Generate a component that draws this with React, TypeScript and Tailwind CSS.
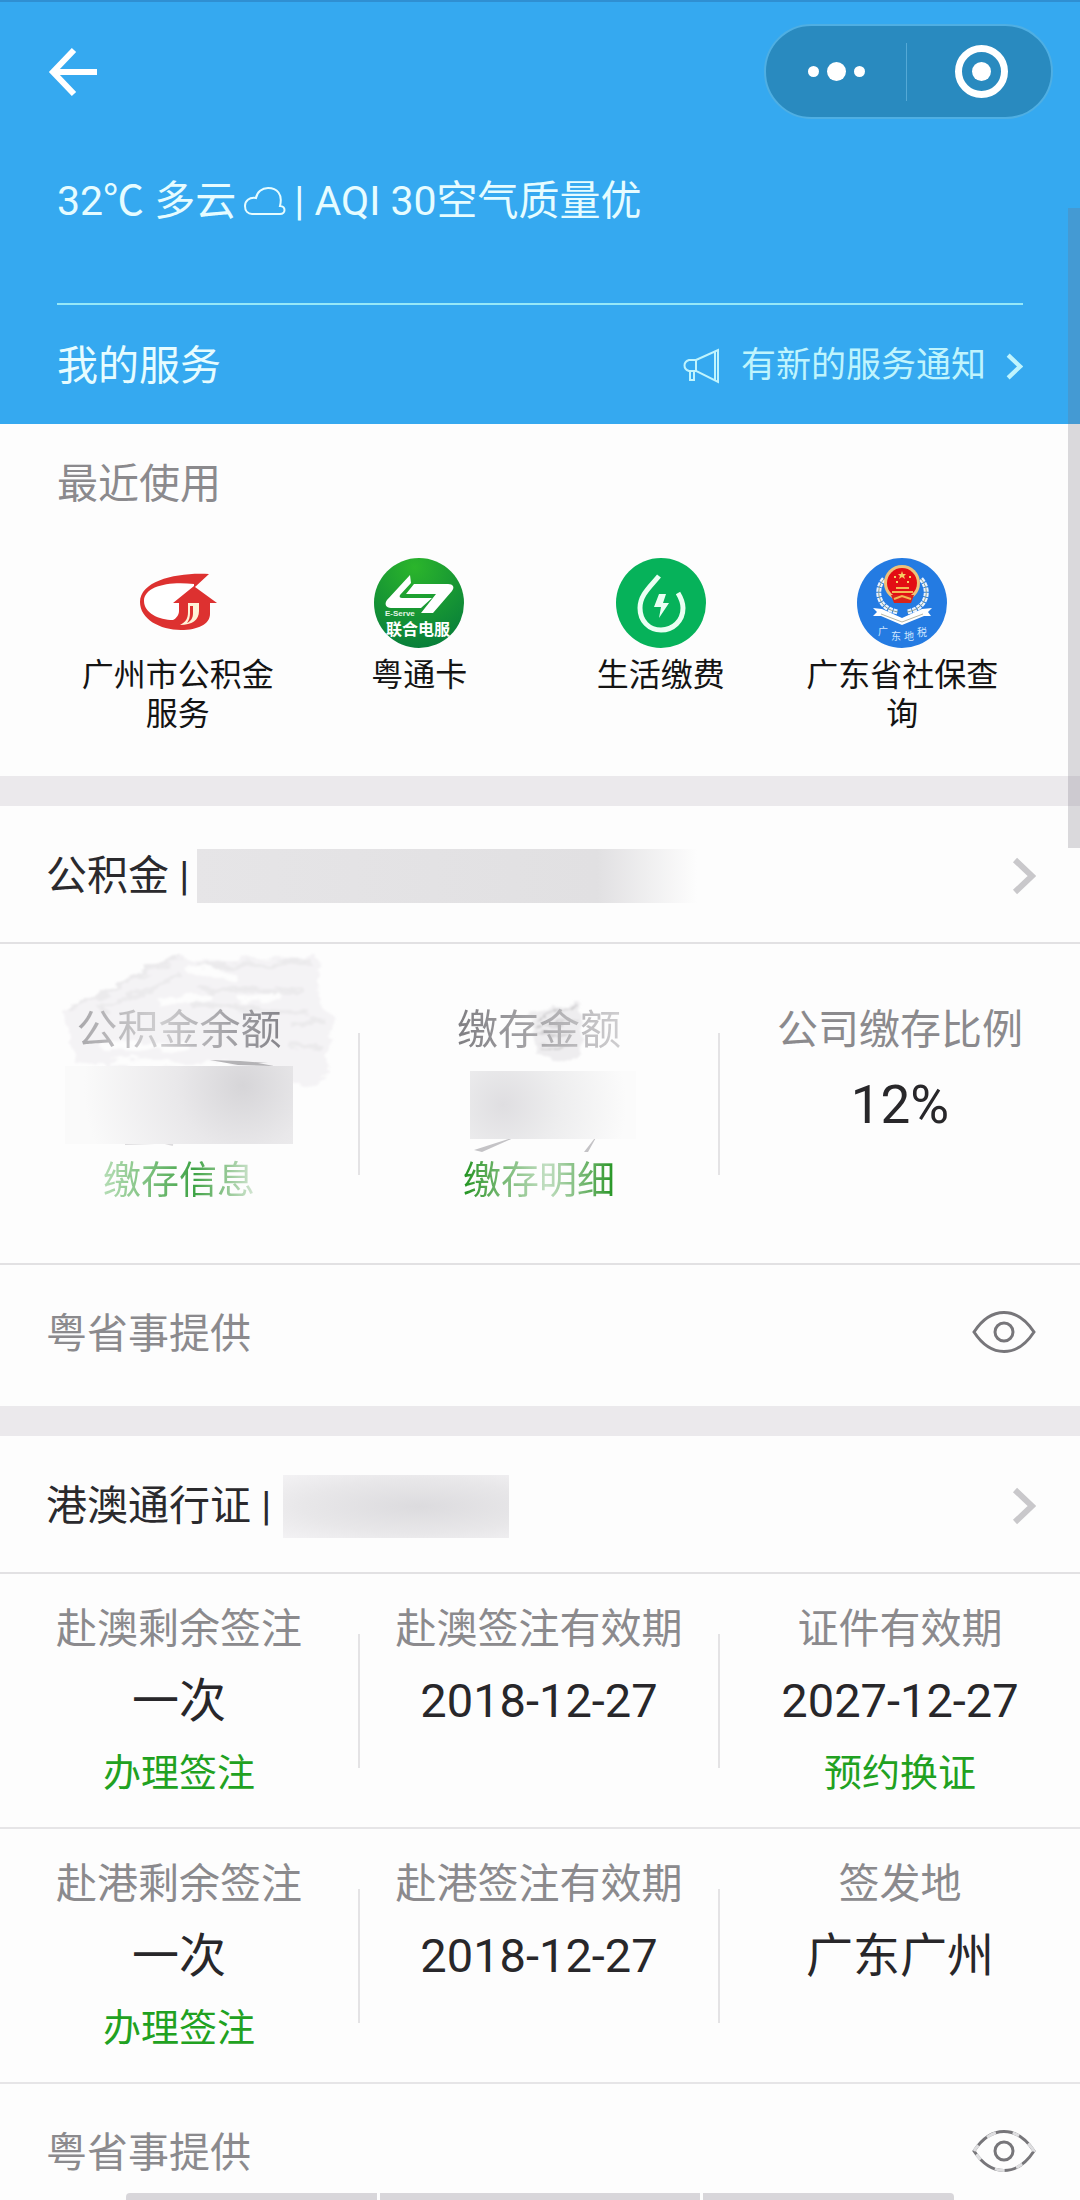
import { useState } from "react";
import type { ReactNode } from "react";

type Field = {
  label: ReactNode;
  value?: ReactNode;
  action?: ReactNode;
};

function FundLogo() {
  return (
    <svg viewBox="0 0 90 90" className="size-[90px]" aria-hidden="true">
      <path
        d="M76 16C46 14 7 22 7 44c0 17 20 28 41 28 17 0 29-6 29-16V45h7L62 29l14-13z"
        fill="#dd3130"
      />
      <path d="M61 26C36 23 11 28 11 43c0 12 15 19 29 19 4-2 6-6 6-9v-8h-6l21-17z" fill="#fff" />
      <path d="M57 45h10v7c0 9-8 15-20 16 6-3 10-8 10-14z" fill="#dd3130" />
      <path d="M55 45h11v8c0 9-7 14-19 14 6-3 8-7 8-13z" fill="#fff3d8" />
      <path d="M57 48h3v7c0 5-2 8-6 10 2-3 3-6 3-10z" fill="#dd3130" />
    </svg>
  );
}

function EServeLogo() {
  return (
    <svg viewBox="0 0 90 90" className="size-[90px]" aria-hidden="true">
      <defs>
        <radialGradient id="eserve" cx="45%" cy="10%" r="90%">
          <stop offset="0" stopColor="#2bb52b" />
          <stop offset="1" stopColor="#087f3a" />
        </radialGradient>
      </defs>
      <circle cx="45" cy="45" r="45" fill="url(#eserve)" />
      <path d="M36 17 37 25 26 37c-1 2 0 3 2 3h30L47 50H17c-5 0-7-4-4-8z" fill="#fff" />
      <path d="M40 26h34c5 0 7 3 4 7L59 55H47l15-19H32z" fill="#fff" />
      <text x="11" y="58" fontSize="8" fontWeight="700" fill="#e4f5e4" fontFamily="Liberation Sans, sans-serif">
        E-Serve
      </text>
      <text x="12" y="77" fontSize="16" fontWeight="700" fill="#fff" fontFamily="Noto Sans CJK SC, sans-serif">
        联合电服
      </text>
    </svg>
  );
}

function UtilityLogo() {
  return (
    <svg viewBox="0 0 90 90" className="size-[90px]" fill="none" aria-hidden="true">
      <circle cx="45" cy="45" r="45" fill="#06b25a" />
      <path
        d="M43 18C34 29 24 37 24 50c0 13 9 22 21 22s22-9 22-22c0-6-2-10-5-15"
        stroke="#eafff3"
        strokeWidth="5"
      />
      <path d="M43 36h7l-3 9h6L43 60l2-11h-7z" fill="#eafff3" />
    </svg>
  );
}

function TaxLogo() {
  return (
    <svg viewBox="0 0 90 90" className="size-[90px]" fill="none" aria-hidden="true">
      <circle cx="45" cy="45" r="45" fill="#247be2" />
      <path d="M27 21c-10 11-6 30 14 33M64 21c10 11 6 30-14 33" stroke="#e9f3ff" strokeWidth="5" strokeDasharray="4 1" />
      <path d="M27 21c-10 11-6 30 14 33M64 21c10 11 6 30-14 33" stroke="#8d9f90" strokeWidth="1" />
      <circle cx="45" cy="25" r="18" fill="#eec27a" />
      <circle cx="45" cy="25" r="15" fill="#e30d14" />
      <path d="M34 37h23l-3 8H37z" fill="#d8231b" />
      <path d="M35 34h21M39 30h13M37 41l8-3 9 3" stroke="#f3b653" strokeWidth="2" />
      <path d="m45 13 1 3h3l-2 2 1 3-3-2-3 2 1-3-2-2h3z" fill="#f6cf62" />
      <path d="M37 18h2v2h-2zM52 18h2v2h-2zM39 23h2v2h-2zM50 23h2v2h-2z" fill="#f6cf62" />
      <path d="m16 50 9 1 20 9 20-9 10-1-4 4 3 4-7 0-22 9-21-9h-8l4-4z" fill="#fff" />
      <path d="m24 56 21 8 21-8" stroke="#b7b7a5" strokeWidth="1" />
      <g fill="#cfe6ff" fontSize="10" fontFamily="Noto Sans CJK SC, sans-serif">
        <text x="21" y="77">广</text>
        <text x="34" y="82">东</text>
        <text x="47" y="82">地</text>
        <text x="60" y="78">税</text>
      </g>
    </svg>
  );
}

function Chevron({ className }: { className: string }) {
  return (
    <svg viewBox="0 0 24 38" className={className} fill="none" stroke="currentColor" strokeWidth="6" aria-hidden="true">
      <path d="m3 3 17 16L3 35" />
    </svg>
  );
}

function Eye({ worn }: { worn?: boolean }) {
  return (
    <svg viewBox="0 0 64 44" className="h-11 w-16" fill="none" stroke="#77767a" strokeWidth="3" aria-hidden="true">
      <path d="M2 22C19-4 45-4 62 22 45 48 19 48 2 22z" />
      {worn && <path d="M2 22C19-4 45-4 62 22 45 48 19 48 2 22z" stroke="#dedee0" strokeDasharray="7 12 10 17" />}
      <circle cx="32" cy="22" r="9" />
    </svg>
  );
}

const recent = [
  { name: "广州市公积金服务", logo: <FundLogo /> },
  { name: "粤通卡", logo: <EServeLogo /> },
  { name: "生活缴费", logo: <UtilityLogo /> },
  { name: "广东省社保查询", logo: <TaxLogo /> },
];

const macau: Field[] = [
  { label: "赴澳剩余签注", value: "一次", action: "办理签注" },
  { label: "赴澳签注有效期", value: "2018-12-27" },
  { label: "证件有效期", value: "2027-12-27", action: "预约换证" },
];

const hongkong: Field[] = [
  { label: "赴港剩余签注", value: "一次", action: "办理签注" },
  { label: "赴港签注有效期", value: "2018-12-27" },
  { label: "签发地", value: "广东广州" },
];

function SectionHeader({ title, children }: { title: string; children: ReactNode }) {
  return (
    <a href="#" className="flex h-[138px] items-center border-b-2 border-[#e2e1e3] pt-1 pr-11 pl-[46px]">
      <h2 className="text-[41px] leading-12 whitespace-pre text-[#2b2a2d]">{title} |</h2>
      {children}
      <Chevron className="ml-auto h-[38px] w-6 text-[#c9c8cb]" />
    </a>
  );
}

function Fields({ items }: { items: Field[] }) {
  return (
    <div className="flex h-[255px] border-b-2 border-[#e6e5e7]">
      {items.map((f, i) => (
        <div key={i} className="flex flex-1">
          <div className="flex flex-1 flex-col items-center gap-5 pt-[31px]">
            <div className="text-[41px] leading-12 text-[#8b8a8d]">{f.label}</div>
            <div className="text-[47px] leading-14 text-[#28272a]">{f.value}</div>
            {f.action && (
              <a href="#" className="text-[38px] leading-12 text-[#21a121]">
                {f.action}
              </a>
            )}
          </div>
          {i < items.length - 1 && <div className="h-[134px] w-[2px] self-center bg-[#e4e3e5]" />}
        </div>
      ))}
    </div>
  );
}

function Provider({ hidden, onToggle, last }: { hidden: boolean; onToggle: () => void; last?: boolean }) {
  return (
    <div className={`flex items-center justify-between pt-[45px] pr-11 pl-[46px] ${last ? "pb-4" : "pb-12"}`}>
      <span className="text-[41px] leading-12 text-[#8b8a8d]">粤省事提供</span>
      <button aria-label="显示或隐藏" aria-pressed={hidden} onClick={onToggle} className="cursor-pointer pb-1">
        <Eye worn={last} />
      </button>
    </div>
  );
}

export default function App() {
  const [hidden, setHidden] = useState(true);
  const toggle = () => setHidden((v) => !v);

  return (
    <div className="relative w-full overflow-hidden bg-[#fdfdfd] font-['Roboto','Noto_Sans_CJK_SC',sans-serif]" lang="zh-CN">
      <header className="border-t-2 border-[#2f8fd2] bg-[#35a9f0] px-[57px] text-[#e6fcff]">
        <div className="-mx-[57px] flex items-center justify-between pt-[22px] pr-[27px] pl-12">
          <button aria-label="返回" className="cursor-pointer">
            <svg viewBox="0 0 50 50" className="size-[50px]" fill="none" stroke="#fff" strokeWidth="6" aria-hidden="true">
              <path d="M26 3 5 25l21 22M5 25h44" />
            </svg>
          </button>
          <div className="flex h-[95px] w-[289px] items-center rounded-full border-2 border-[#4fafe3] bg-[#298abf]">
            <button aria-label="更多" className="flex h-full flex-1 cursor-pointer items-center justify-center gap-2">
              <span className="size-[11px] rounded-full bg-white" />
              <span className="size-[19px] rounded-full bg-white" />
              <span className="size-[11px] rounded-full bg-white" />
            </button>
            <span className="h-[58px] w-px bg-[#55a9d6]" />
            <button aria-label="关闭" className="flex h-full flex-1 cursor-pointer items-center justify-center pl-1">
              <span className="flex size-[53px] items-center justify-center rounded-full border-[7px] border-white">
                <span className="size-[19px] rounded-full bg-white" />
              </span>
            </button>
          </div>
        </div>

        <p className="mt-[58px] flex items-center text-[41px] leading-12 whitespace-pre">
          <span>32℃ 多云</span>
          <svg viewBox="0 0 42 30" className="mx-2 h-[30px] w-[42px]" fill="none" stroke="currentColor" strokeWidth="2" aria-hidden="true">
            <path d="M8 28h28c6 0 6-8 0-8C39 8 33 2 24 2 18 2 13 6 12 12 5 11 1 15 1 20c0 5 3 8 7 8z" />
          </svg>
          <span>| AQI 30空气质量优</span>
        </p>

        <div className="mt-[78px] flex h-[121px] items-center justify-between border-t-2 border-[#96e8f8] pt-[3px]">
          <h1 className="text-[41px] leading-12">我的服务</h1>
          <a href="#" className="flex items-center text-[35px] leading-12 text-[#bff4fd]">
            <svg viewBox="0 0 38 36" className="mr-5 h-9 w-[38px]" fill="none" stroke="currentColor" strokeWidth="2" aria-hidden="true">
              <path d="M13 12 35 2v32L13 23zM13 12H6c-6 2-6 9 0 11h7M7 23v9h4v-9M32 4v28" />
            </svg>
            有新的服务通知
            <Chevron className="ml-5 h-[27px] w-[17px]" />
          </a>
        </div>
      </header>

      <section className="px-[57px] pt-9 pb-[42px]">
        <h2 className="text-[41px] leading-12 text-[#8b8a8d]">最近使用</h2>
        <div className="mt-[50px] grid grid-cols-4">
          {recent.map((s) => (
            <a key={s.name} href="#" className="flex flex-col items-center gap-2 px-5">
              {s.logo}
              <span className="text-center text-[32px] leading-[39px] text-[#141414]">{s.name}</span>
            </a>
          ))}
        </div>
      </section>

      <section className="border-t-[30px] border-[#ebe9ec]">
        <SectionHeader title="公积金">
          <span className="ml-2 h-[54px] w-[500px] bg-linear-to-r from-[#e6e5e7] via-[#e1e0e2] via-80% to-[#fdfdfd]" />
        </SectionHeader>
        <div className="flex h-[321px] border-b-2 border-[#e2e1e3]">
          <div className="relative flex flex-1">
            {/* rubbed-out strokes behind the balance */}
            <svg viewBox="0 0 310 280" className="absolute top-0 left-10 h-[280px] w-[310px]" aria-hidden="true">
              <defs>
                <filter id="rub" x="-10%" y="-10%" width="120%" height="120%">
                  <feTurbulence type="fractalNoise" baseFrequency="0.05 0.12" numOctaves="4" result="n" />
                  <feDisplacementMap in="SourceGraphic" in2="n" scale="14" />
                  <feGaussianBlur stdDeviation="1" />
                </filter>
              </defs>
              <g filter="url(#rub)">
                <path d="M24 68 140 10l14 8 124-6 2 50 14 10-6 48-12 22-240-22z" fill="#f4f3f5" />
                <path d="m28 66 112-54M60 66l80-36M150 25l120-8M160 44l105 4M150 60l120 10M250 80l34-4M248 100l34 4" stroke="#ebeaec" strokeWidth="5" fill="none" />
                <path d="m146 24 50 10M120 60l50-8M60 100l90 4M200 56l40-4M70 118l120 4" stroke="#fdfdfd" strokeWidth="7" fill="none" />
              </g>
              <path d="m170 116 30 1 28 2h-10l16 3-36-1z" fill="#b4b3b6" />
              <path d="m85 200 30-1m10 0 8 2m4-3h14" stroke="#dcdbdd" strokeWidth="2" />
            </svg>
            <div className="relative flex flex-1 flex-col items-center gap-[23px] pt-[62px]">
              <div className="bg-linear-to-r from-[#a9a8ab] via-[#cfced0] via-40% to-[#85848a] bg-clip-text text-[41px] leading-12 text-transparent">
                公积金余额
              </div>
              <div className="flex h-14 items-center">
                <span className="h-[78px] w-[228px] bg-[radial-gradient(circle_at_78%_25%,#d6d5d8,#e9e8ea_35%,#fafafa_85%)]" />
              </div>
              <a href="#" className="bg-linear-to-r from-[#b5ddb5] via-[#3da345] via-60% to-[#d5e6d5] bg-clip-text text-[38px] leading-12 text-transparent">
                缴存信息
              </a>
            </div>
            <div className="h-[142px] w-[2px] self-center bg-[#e4e3e5]" />
          </div>

          <div className="relative flex flex-1">
            <svg viewBox="0 0 200 190" className="absolute top-[50px] left-[90px] h-[190px] w-[200px]" aria-hidden="true">
              <g filter="url(#rub)">
                <path d="m80 18 50-10 2 60-44-6z" fill="#eeedef" />
                <path d="m84 24 44-12M86 34l42-8M88 42l34-4M90 54l30-2" stroke="#cdccce" strokeWidth="2" fill="none" />
              </g>
              <path d="m24 156 44-14-36 16zM134 158l14-18-10 18z" fill="#c4c3c6" />
            </svg>
            <div className="relative flex flex-1 flex-col items-center gap-[23px] pt-[62px]">
              <div className="bg-linear-to-r from-[#7f7e82] via-[#aaa9ac] via-50% to-[#cfced0] bg-clip-text text-[41px] leading-12 text-transparent">
                缴存金额
              </div>
              <div className="flex h-14 items-center pl-7">
                <span className="h-[68px] w-[166px] bg-[radial-gradient(circle_at_20%_50%,#dfdee1,#ededee_40%,#fbfbfb_90%)]" />
              </div>
              <a href="#" className="bg-linear-to-r from-[#1c941c] via-[#c3dfc3] via-55% to-[#1c941c] bg-clip-text text-[38px] leading-12 text-transparent">
                缴存明细
              </a>
            </div>
            <div className="h-[142px] w-[2px] self-center bg-[#e4e3e5]" />
          </div>

          <div className="flex flex-1 flex-col items-center gap-[23px] pt-[62px]">
            <div className="text-[41px] leading-12 text-[#8b8a8d]">公司缴存比例</div>
            <div className="text-[53px] leading-14 text-[#28272a]">12%</div>
          </div>
        </div>
        <Provider hidden={hidden} onToggle={toggle} />
      </section>

      <section className="border-t-[30px] border-[#ebe9ec]">
        <SectionHeader title="港澳通行证">
          <span className="ml-3 h-[63px] w-[226px] bg-[radial-gradient(ellipse_at_60%_50%,#dcdbde,#e8e7e9_60%,#f3f2f4)]" />
        </SectionHeader>
        <Fields items={macau} />
        <Fields items={hongkong} />
        <Provider hidden={hidden} onToggle={toggle} last />
      </section>

      <div className="mx-auto grid h-[7px] w-[828px] grid-cols-[251fr_319fr_251fr] gap-[3px]">
        <span className="rounded-tl bg-[#d8d6da]" />
        <span className="bg-[#d8d6da]" />
        <span className="rounded-tr bg-[#d8d6da]" />
      </div>

      {/* scroll thumb */}
      <div className="absolute top-[208px] right-0 h-[640px] w-3 bg-[#74707a]/25" />
    </div>
  );
}
